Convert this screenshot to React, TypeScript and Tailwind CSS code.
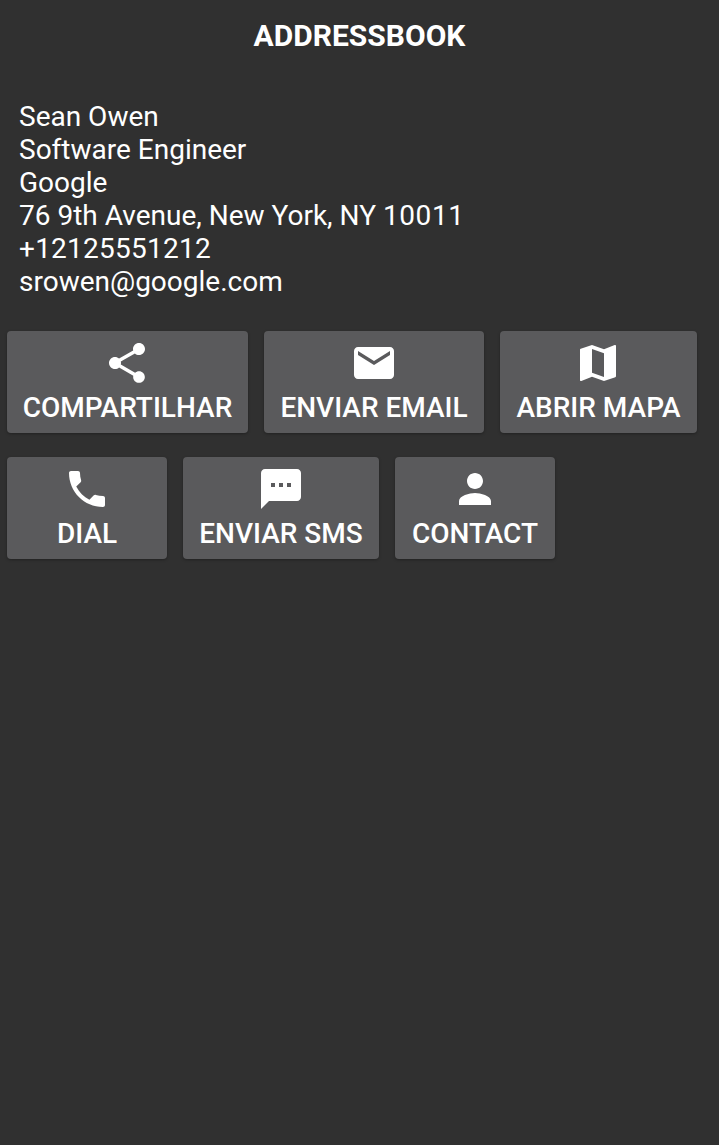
import React from 'react';

const ICONS: Record<string, string> = {
  share:
    'M18 16.08c-.76 0-1.44.3-1.96.77L8.91 12.7c.05-.23.09-.46.09-.7s-.04-.47-.09-.7l7.05-4.11c.54.5 1.25.81 2.04.81 1.66 0 3-1.34 3-3s-1.34-3-3-3-3 1.34-3 3c0 .24.04.47.09.7L8.04 9.81C7.5 9.31 6.79 9 6 9c-1.66 0-3 1.34-3 3s1.34 3 3 3c.79 0 1.5-.31 2.04-.81l7.12 4.16c-.05.21-.08.43-.08.65 0 1.61 1.31 2.92 2.92 2.92 1.61 0 2.92-1.31 2.92-2.92s-1.31-2.92-2.92-2.92z',
  email:
    'M20 4H4c-1.1 0-1.99.9-1.99 2L2 18c0 1.1.9 2 2 2h16c1.1 0 2-.9 2-2V6c0-1.1-.9-2-2-2zm0 4l-8 5-8-5V6l8 5 8-5v2z',
  map: 'M20.5 3l-.16.03L15 5.1 9 3 3.36 4.9c-.21.07-.36.25-.36.48V20.5c0 .28.22.5.5.5l.16-.03L9 18.9l6 2.1 5.64-1.9c.21-.07.36-.25.36-.48V3.5c0-.28-.22-.5-.5-.5zM15 19l-6-2.11V5l6 2.11V19z',
  phone:
    'M6.62 10.79c1.44 2.83 3.76 5.14 6.59 6.59l2.2-2.2c.27-.27.67-.36 1.02-.24 1.12.37 2.33.57 3.57.57.55 0 1 .45 1 1V20c0 .55-.45 1-1 1-9.39 0-17-7.61-17-17 0-.55.45-1 1-1h3.5c.55 0 1 .45 1 1 0 1.25.2 2.45.57 3.57.11.35.03.74-.25 1.02l-2.2 2.2z',
  sms: 'M20 2H4c-1.1 0-1.99.9-1.99 2L2 22l4-4h14c1.1 0 2-.9 2-2V4c0-1.1-.9-2-2-2zM9 11H7V9h2v2zm4 0h-2V9h2v2zm4 0h-2V9h2v2z',
  person:
    'M12 12c2.21 0 4-1.79 4-4s-1.79-4-4-4-4 1.79-4 4 1.79 4 4 4zm0 2c-2.67 0-8 1.34-8 4v2h16v-2c0-2.66-5.33-4-8-4z',
};

function ActionButton({ icon, label, width, iconNudge = '' }: { icon: string; label: string; width: string; iconNudge?: string }) {
  return (
    <button
      className={`flex h-[102px] flex-col items-center rounded-[4px] bg-[#5a5a5c] pt-2 shadow-[0_1px_3px_rgba(0,0,0,0.3)] ${width}`}
    >
      <svg viewBox="0 0 24 24" className={`h-12 w-12 fill-white ${iconNudge}`}>
        <path d={ICONS[icon]} />
      </svg>
      <span className="mt-[4px] text-[28px] leading-[33px] font-medium whitespace-nowrap text-white">{label}</span>
    </button>
  );
}

export default function App() {
  return (
    <div className="min-h-[1145px] bg-[#303030] font-['Roboto',sans-serif]">
      <h1 className="pt-[19px] text-center text-[30px] leading-[33px] font-bold text-white">ADDRESSBOOK</h1>

      <div className="mt-[48px] pl-[19px] text-[28px] leading-[33px] text-white">
        <p>Sean Owen</p>
        <p>Software Engineer</p>
        <p>Google</p>
        <p>
          76 9th Avenue, New York, NY <span className="tracking-[0.6px]">10011</span>
        </p>
        <p className="tracking-[0.25px]">+12125551212</p>
        <p>srowen@google.com</p>
      </div>

      <div className="mt-[33px] flex flex-col gap-6 pl-[7px]">
        <div className="flex gap-4">
          <ActionButton icon="share" label="COMPARTILHAR" width="w-[241px]" iconNudge="mr-px" />
          <ActionButton icon="email" label="ENVIAR EMAIL" width="w-[220px]" />
          <ActionButton icon="map" label="ABRIR MAPA" width="w-[197px]" iconNudge="mr-px" />
        </div>
        <div className="flex gap-4">
          <ActionButton icon="phone" label="DIAL" width="w-40" />
          <ActionButton icon="sms" label="ENVIAR SMS" width="w-[196px]" />
          <ActionButton icon="person" label="CONTACT" width="w-40" />
        </div>
      </div>
    </div>
  );
}
